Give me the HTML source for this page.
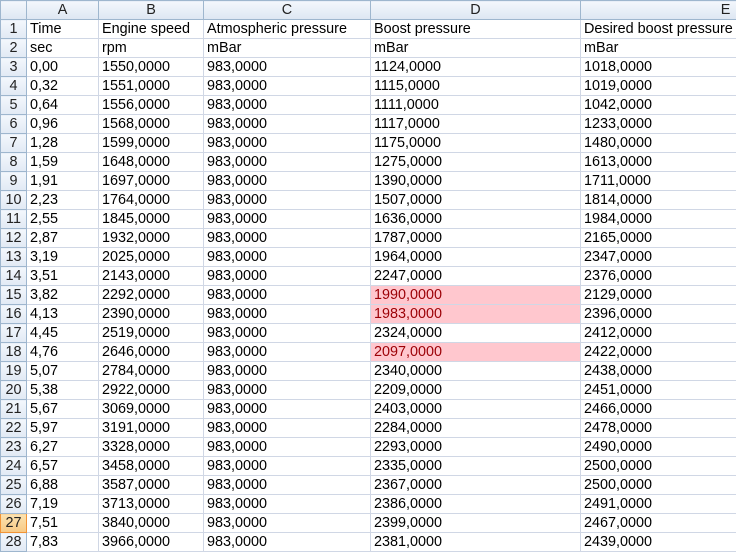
<!DOCTYPE html>
<html><head><meta charset="utf-8"><style>
body{margin:0;width:736px;height:549px;overflow:hidden;background:#fff;font-family:"Liberation Sans",Arial,sans-serif;font-size:14.4px;position:relative;}
table{border-collapse:collapse;table-layout:fixed;position:absolute;left:0;top:0;width:870px;}
td{height:18px;padding:0 0 0 3px;border:1px solid #d0d7e5;white-space:nowrap;overflow:hidden;line-height:18px;color:#000;}
tr.h td{background:linear-gradient(#f3f7fc,#dde6f2);border-color:#9eb6ce;text-align:center;padding:0;color:#222;}
td.r{background:linear-gradient(#f3f7fc,#e1e9f4);border-color:#9eb6ce;text-align:center;padding:0;color:#222;}
td.sel{background:linear-gradient(#fbe2b0,#f8c984);border-color:#f29436;}
td.p{background:#ffc7ce;color:#9c0006;}
</style></head><body>
<table>
<colgroup><col style="width:26px"><col style="width:72px"><col style="width:105px"><col style="width:167px"><col style="width:210px"><col style="width:290px"></colgroup>
<tr class="h"><td></td><td>A</td><td>B</td><td>C</td><td>D</td><td>E</td></tr>
<tr><td class="r">1</td><td>Time</td><td>Engine speed</td><td>Atmospheric pressure</td><td>Boost pressure</td><td>Desired boost pressure</td></tr>
<tr><td class="r">2</td><td>sec</td><td>rpm</td><td>mBar</td><td>mBar</td><td>mBar</td></tr>
<tr><td class="r">3</td><td>0,00</td><td>1550,0000</td><td>983,0000</td><td>1124,0000</td><td>1018,0000</td></tr>
<tr><td class="r">4</td><td>0,32</td><td>1551,0000</td><td>983,0000</td><td>1115,0000</td><td>1019,0000</td></tr>
<tr><td class="r">5</td><td>0,64</td><td>1556,0000</td><td>983,0000</td><td>1111,0000</td><td>1042,0000</td></tr>
<tr><td class="r">6</td><td>0,96</td><td>1568,0000</td><td>983,0000</td><td>1117,0000</td><td>1233,0000</td></tr>
<tr><td class="r">7</td><td>1,28</td><td>1599,0000</td><td>983,0000</td><td>1175,0000</td><td>1480,0000</td></tr>
<tr><td class="r">8</td><td>1,59</td><td>1648,0000</td><td>983,0000</td><td>1275,0000</td><td>1613,0000</td></tr>
<tr><td class="r">9</td><td>1,91</td><td>1697,0000</td><td>983,0000</td><td>1390,0000</td><td>1711,0000</td></tr>
<tr><td class="r">10</td><td>2,23</td><td>1764,0000</td><td>983,0000</td><td>1507,0000</td><td>1814,0000</td></tr>
<tr><td class="r">11</td><td>2,55</td><td>1845,0000</td><td>983,0000</td><td>1636,0000</td><td>1984,0000</td></tr>
<tr><td class="r">12</td><td>2,87</td><td>1932,0000</td><td>983,0000</td><td>1787,0000</td><td>2165,0000</td></tr>
<tr><td class="r">13</td><td>3,19</td><td>2025,0000</td><td>983,0000</td><td>1964,0000</td><td>2347,0000</td></tr>
<tr><td class="r">14</td><td>3,51</td><td>2143,0000</td><td>983,0000</td><td>2247,0000</td><td>2376,0000</td></tr>
<tr><td class="r">15</td><td>3,82</td><td>2292,0000</td><td>983,0000</td><td class="p">1990,0000</td><td>2129,0000</td></tr>
<tr><td class="r">16</td><td>4,13</td><td>2390,0000</td><td>983,0000</td><td class="p">1983,0000</td><td>2396,0000</td></tr>
<tr><td class="r">17</td><td>4,45</td><td>2519,0000</td><td>983,0000</td><td>2324,0000</td><td>2412,0000</td></tr>
<tr><td class="r">18</td><td>4,76</td><td>2646,0000</td><td>983,0000</td><td class="p">2097,0000</td><td>2422,0000</td></tr>
<tr><td class="r">19</td><td>5,07</td><td>2784,0000</td><td>983,0000</td><td>2340,0000</td><td>2438,0000</td></tr>
<tr><td class="r">20</td><td>5,38</td><td>2922,0000</td><td>983,0000</td><td>2209,0000</td><td>2451,0000</td></tr>
<tr><td class="r">21</td><td>5,67</td><td>3069,0000</td><td>983,0000</td><td>2403,0000</td><td>2466,0000</td></tr>
<tr><td class="r">22</td><td>5,97</td><td>3191,0000</td><td>983,0000</td><td>2284,0000</td><td>2478,0000</td></tr>
<tr><td class="r">23</td><td>6,27</td><td>3328,0000</td><td>983,0000</td><td>2293,0000</td><td>2490,0000</td></tr>
<tr><td class="r">24</td><td>6,57</td><td>3458,0000</td><td>983,0000</td><td>2335,0000</td><td>2500,0000</td></tr>
<tr><td class="r">25</td><td>6,88</td><td>3587,0000</td><td>983,0000</td><td>2367,0000</td><td>2500,0000</td></tr>
<tr><td class="r">26</td><td>7,19</td><td>3713,0000</td><td>983,0000</td><td>2386,0000</td><td>2491,0000</td></tr>
<tr><td class="r sel">27</td><td>7,51</td><td>3840,0000</td><td>983,0000</td><td>2399,0000</td><td>2467,0000</td></tr>
<tr><td class="r">28</td><td>7,83</td><td>3966,0000</td><td>983,0000</td><td>2381,0000</td><td>2439,0000</td></tr>
</table>
</body></html>
